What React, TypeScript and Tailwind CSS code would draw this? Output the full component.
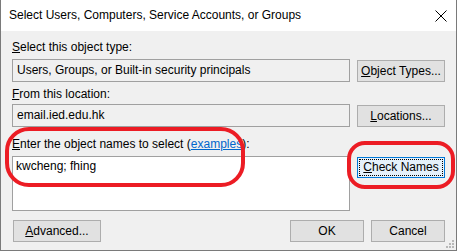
import React from 'react';

const font = "font-['Segoe_UI','Liberation_Sans',Arial,sans-serif]";

function Btn({ children, className = '' }: { children: React.ReactNode; className?: string }) {
  return (
    <div className={`flex items-center justify-center h-[22px] bg-[#e1e1e1] border border-[#adadad] text-black ${className}`}>
      {children}
    </div>
  );
}

function Grip() {
  return (
    <svg width="8" height="8" viewBox="0 0 8 8" className="absolute right-[2px] bottom-[2px]">
      {[
        [6, 0], [6, 3], [3, 3], [6, 6], [3, 6], [0, 6],
      ].map(([x, y]) => (
        <rect key={`${x}-${y}`} x={x} y={y} width="2" height="2" fill="#b8b8b8" />
      ))}
    </svg>
  );
}

export default function App() {
  return (
    <div className={`relative w-[457px] h-[251px] bg-[#f0f0f0] border-x border-b border-[#7a7a7a] flex flex-col text-[12px] leading-[15px] text-black ${font}`}>
      {/* title bar */}
      <div className="h-[31px] bg-white flex items-center justify-between pl-[8px] pr-[9px] shrink-0">
        <span className="text-[12px]">Select Users, Computers, Service Accounts, or Groups</span>
        <svg width="12" height="12" viewBox="0 0 12 12">
          <path d="M0.5 0.5 L11.5 11.5 M11.5 0.5 L0.5 11.5" stroke="#000" strokeWidth="1" />
        </svg>
      </div>

      <div className="flex flex-col pl-[11px] pr-[11px] pt-[9px] flex-1">
        <div className="h-[15px]"><span className="underline">S</span>elect this object type:</div>
        <div className="flex items-start gap-[7px] mt-[4px]">
          <div className="flex-1 h-[23px] border border-[#a0a0a0] bg-[#f0f0f0] flex items-center pl-[4px]">
            Users, Groups, or Built-in security principals
          </div>
          <Btn className="w-[88px] mt-px">
            <span><span className="underline">O</span>bject Types...</span>
          </Btn>
        </div>

        <div className="h-[15px] mt-[5px]"><span className="underline">F</span>rom this location:</div>
        <div className="flex items-start gap-[7px] mt-[2px]">
          <div className="flex-1 h-[23px] border border-[#a0a0a0] bg-[#f0f0f0] flex items-center pl-[4px]">
            email.ied.edu.hk
          </div>
          <Btn className="w-[88px] mt-px">
            <span><span className="underline">L</span>ocations...</span>
          </Btn>
        </div>

        <div className="h-[15px] mt-[10px]">
          <span className="underline">E</span>nter the object names to select (<span className="text-[#0066cc] underline">examples</span>):
        </div>
        <div className="flex items-start gap-[7px] mt-[4px]">
          <div className="flex-1 h-[55px] border border-[#a0a0a0] bg-white pl-[3px] pt-[2px]">
            kwcheng; fhing
          </div>
          <div className="w-[88px] h-[21px] mt-px border border-[#0078d7] bg-[#e5f1fb] p-[1px]">
            <div className="w-full h-full border border-dotted border-black flex items-center justify-center">
              <span><span className="underline">C</span>heck Names</span>
            </div>
          </div>
        </div>

        <div className="flex items-center mt-[9px]">
          <Btn className="w-[88px] ml-px">
            <span><span className="underline">A</span>dvanced...</span>
          </Btn>
          <div className="flex-1" />
          <Btn className="w-[74px]">OK</Btn>
          <Btn className="w-[74px] ml-[7px]">Cancel</Btn>
        </div>
      </div>

      {/* red annotations */}
      <div className="absolute left-[4px] top-[127px] w-[240px] h-[60px] border-[4px] border-[#ec1c24] rounded-[24px] pointer-events-none" />
      <div className="absolute left-[346px] top-[141px] w-[108px] h-[48px] border-[4px] border-[#ec1c24] rounded-[18px] pointer-events-none" />

      <Grip />
    </div>
  );
}
